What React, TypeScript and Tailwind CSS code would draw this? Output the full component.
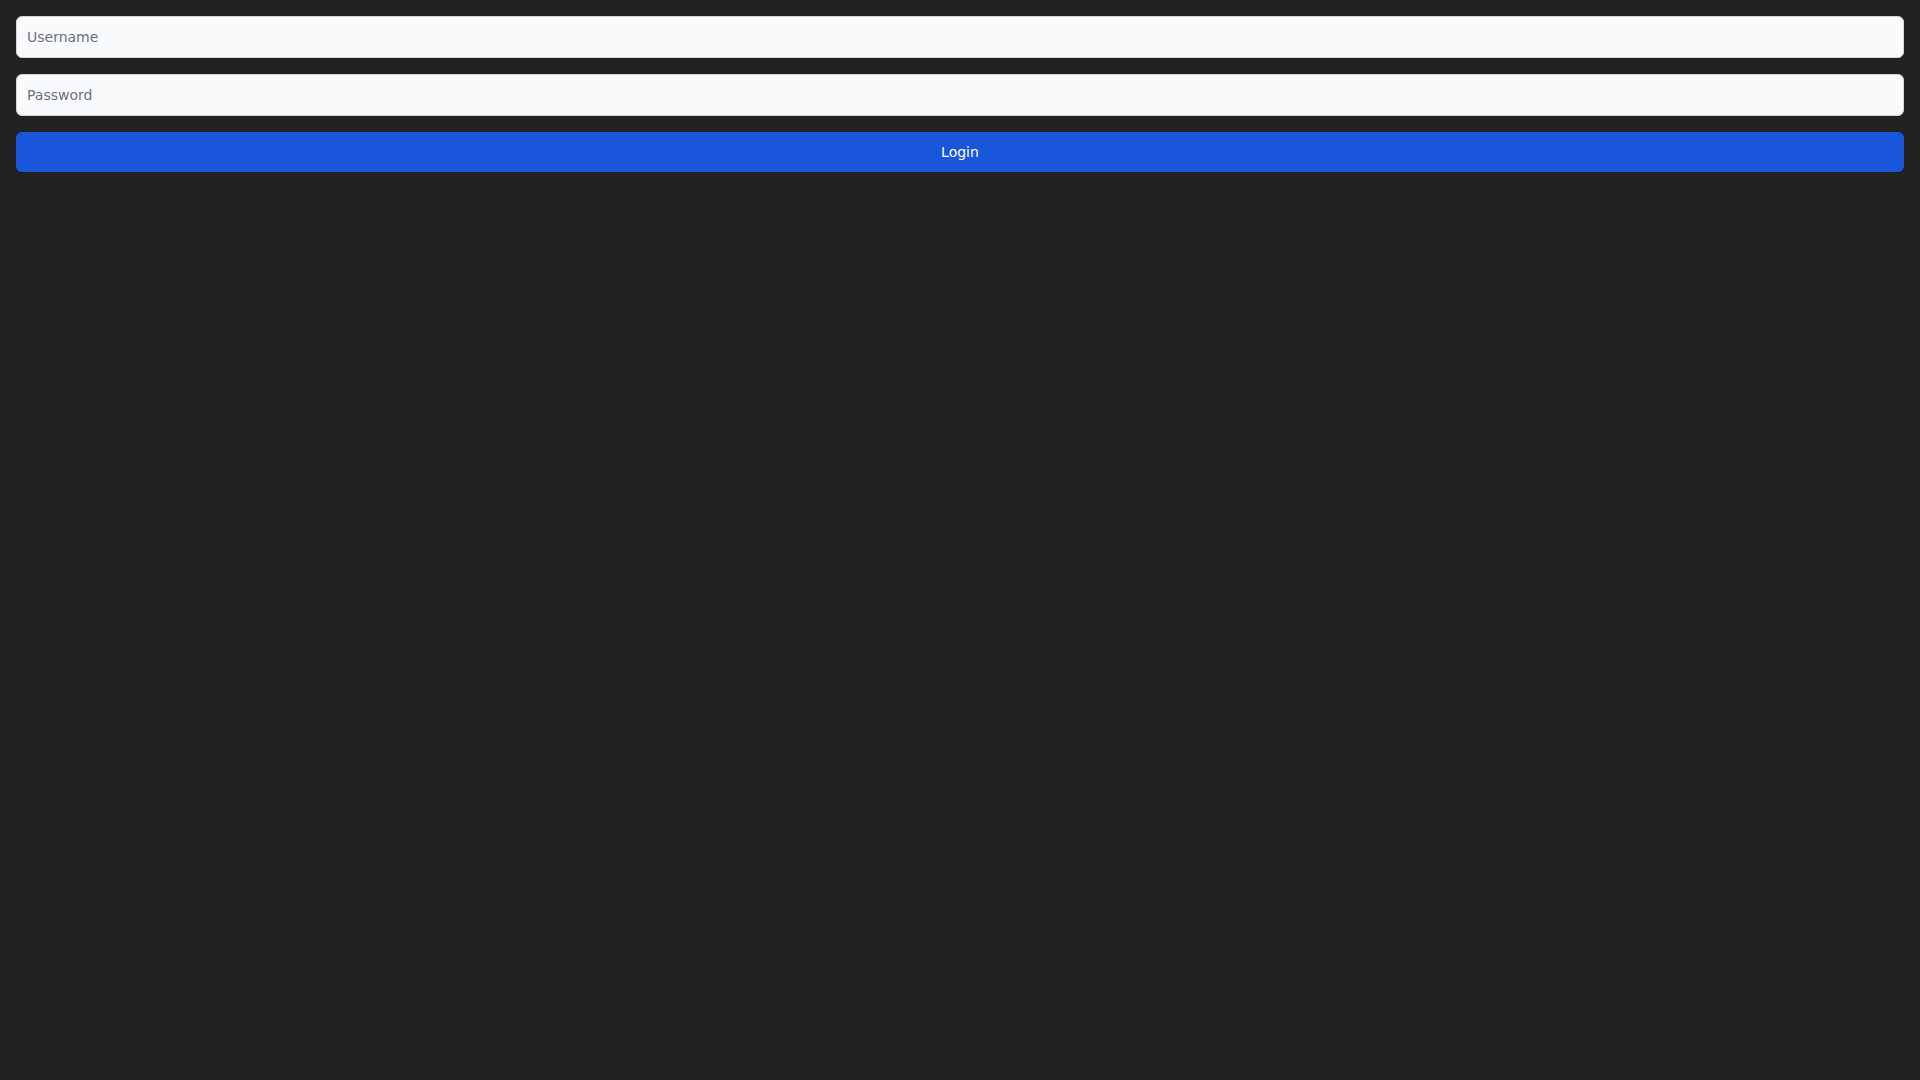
import React from 'react';

export default function App() {
  return (
    <div className="min-h-screen bg-[#222222] p-4" style={{ fontFamily: '"DejaVu Sans", sans-serif' }}>
      <form className="flex flex-col gap-4" onSubmit={(e) => e.preventDefault()}>
        <input
          type="text"
          placeholder="Username"
          className="w-full rounded-md border border-gray-300 bg-gray-50 px-2.5 py-2.5 text-sm text-gray-900 placeholder:text-gray-500 outline-none"
        />
        <input
          type="password"
          placeholder="Password"
          className="w-full rounded-md border border-gray-300 bg-gray-50 px-2.5 py-2.5 text-sm text-gray-900 placeholder:text-gray-500 outline-none"
        />
        <button type="submit" className="w-full rounded-md bg-[#1a56db] py-2.5 text-sm text-white">
          Login
        </button>
      </form>
    </div>
  );
}
